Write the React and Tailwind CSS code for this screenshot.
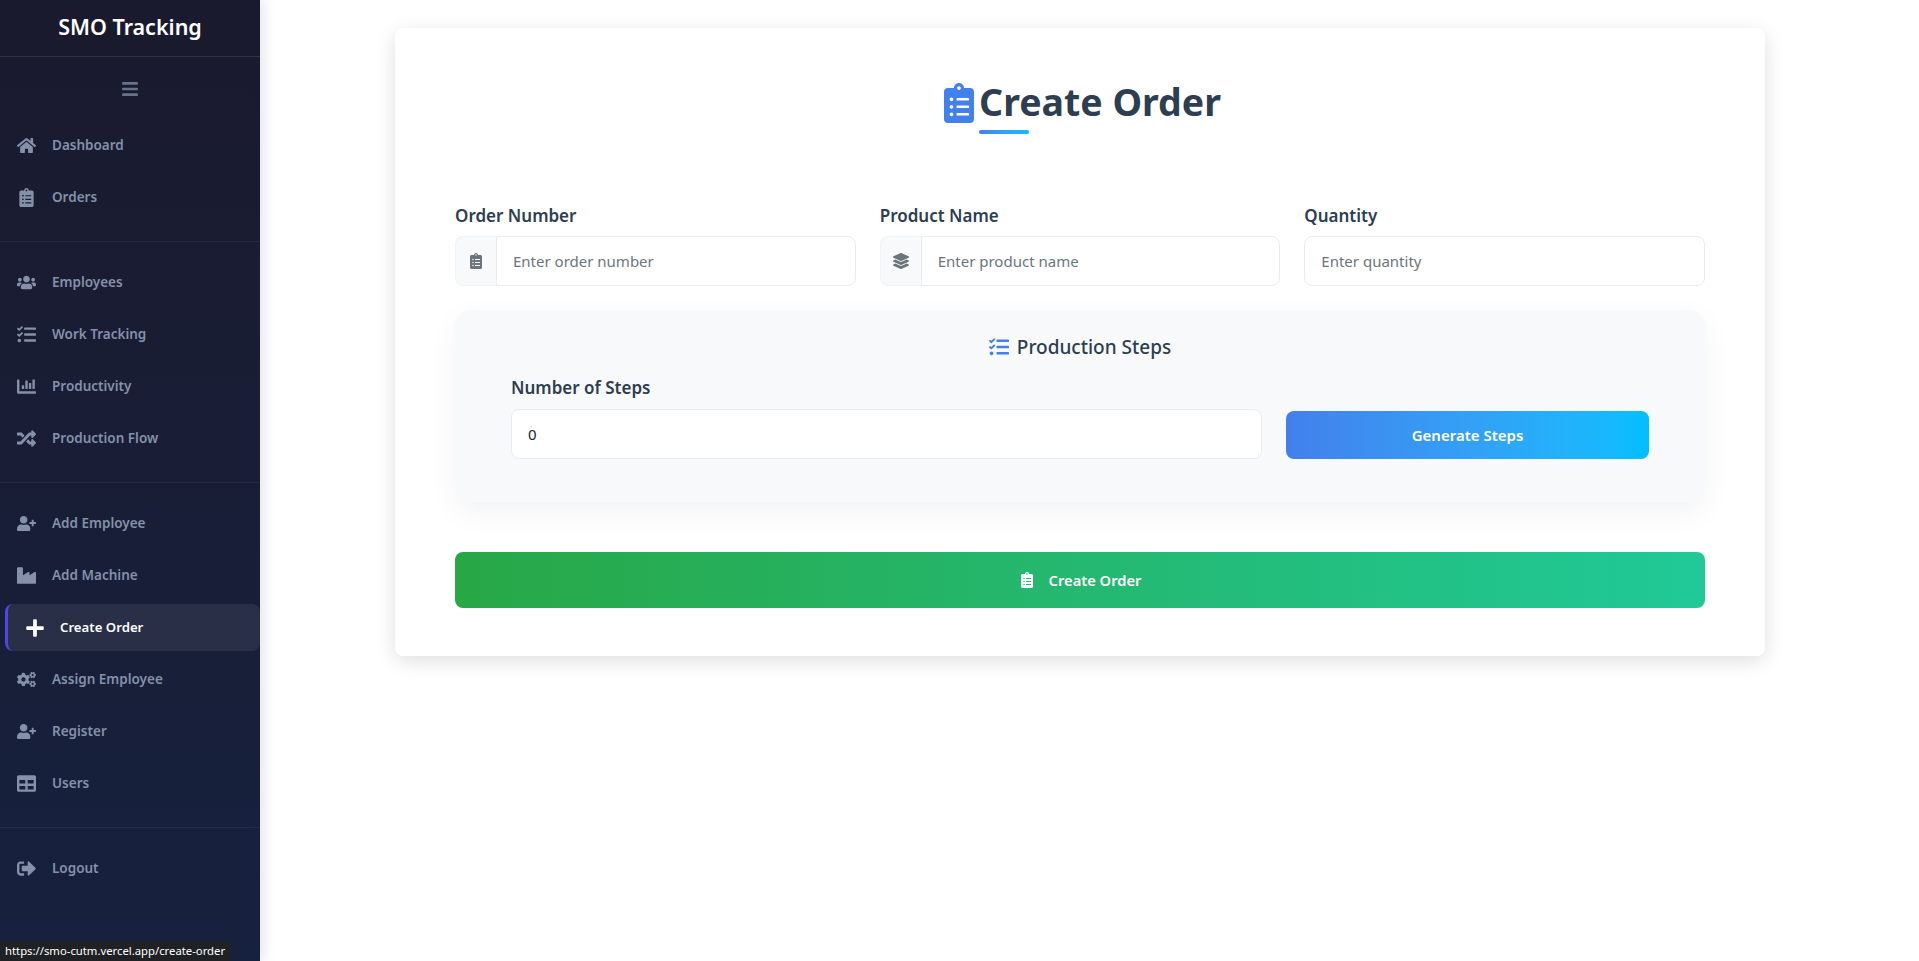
import {
  FaBars,
  FaChartBar,
  FaClipboardList,
  FaCogs,
  FaHome,
  FaIndustry,
  FaLayerGroup,
  FaPlus,
  FaRandom,
  FaSignOutAlt,
  FaTable,
  FaTasks,
  FaUserPlus,
  FaUsers,
} from 'react-icons/fa';

const navGroups = [
  [
    { label: 'Dashboard', icon: FaHome },
    { label: 'Orders', icon: FaClipboardList },
  ],
  [
    { label: 'Employees', icon: FaUsers },
    { label: 'Work Tracking', icon: FaTasks },
    { label: 'Productivity', icon: FaChartBar },
    { label: 'Production Flow', icon: FaRandom },
  ],
  [
    { label: 'Add Employee', icon: FaUserPlus },
    { label: 'Add Machine', icon: FaIndustry },
    { label: 'Create Order', icon: FaPlus, active: true },
    { label: 'Assign Employee', icon: FaCogs },
    { label: 'Register', icon: FaUserPlus },
    { label: 'Users', icon: FaTable },
  ],
  [{ label: 'Logout', icon: FaSignOutAlt }],
];

const NavItem = ({ item }) => {
  const Icon = item.icon;
  if (item.active) {
    return (
      <a className="ml-[5px] flex h-[47px] items-center rounded-lg border-l-[3px] border-[#4f46e5] bg-white/[0.07] pl-[17px] text-[13.2px] font-semibold text-white">
        <span className="flex w-5 justify-center">
          <FaPlus className="text-[20px]" />
        </span>
        <span className="ml-[15px]">{item.label}</span>
      </a>
    );
  }
  return (
    <a className="flex h-[47px] items-center pl-4 text-[13.5px] font-semibold text-[#8491a8]">
      <span className="flex w-5 justify-center">
        <Icon className="text-[19px]" />
      </span>
      <span className="ml-4">{item.label}</span>
    </a>
  );
};

const Sidebar = () => (
  <aside className="flex h-[961px] w-[260px] shrink-0 flex-col bg-gradient-to-b from-[#1a1a2e] to-[#16213e] shadow-[4px_0_12px_rgba(0,0,0,0.1)]">
    <div className="flex h-[57px] items-center justify-center border-b border-white/10 pb-[1px] text-[21.5px] font-semibold text-white">
      SMO Tracking
    </div>
    <div className="flex h-[65px] shrink-0 items-center justify-center pb-[2px] text-[#64748b]">
      <FaBars className="text-lg" />
    </div>
    {navGroups.map((group, i) => (
      <div key={i} className={i < navGroups.length - 1 ? 'flex flex-col gap-[5px] border-b border-white/5 pb-5 mb-[17px]' : 'flex flex-col gap-[5px]'}>
        {group.map((item) => (
          <NavItem key={item.label} item={item} />
        ))}
      </div>
    ))}
  </aside>
);

const Field = ({ label, icon: Icon, placeholder }) => (
  <div className="flex-1">
    <label className="mb-[9px] block text-[17px] leading-[23px] font-semibold text-[#2c3e50]">{label}</label>
    <div className="flex h-[50px]">
      {Icon && (
        <span className="flex w-[41px] shrink-0 items-center justify-center rounded-l-lg border-y border-l border-[#f1f3f5] bg-[#f8f9fa] text-[#6c757d]">
          <Icon className="text-base" />
        </span>
      )}
      <input
        placeholder={placeholder}
        className={`w-full border border-[#e9ecef] bg-white px-4 text-[15px] text-[#212529] outline-none placeholder:text-[#6c757d] ${Icon ? 'rounded-r-lg' : 'rounded-lg'}`}
      />
    </div>
  </div>
);

export default function App() {
  return (
    <div className="relative flex h-[961px] overflow-hidden bg-white font-['Noto_Sans','Open_Sans',sans-serif]">
      <Sidebar />
      <main className="flex-1 pt-7 pl-[135px]">
        <div className="h-[628px] w-[1370px] rounded-lg bg-white px-[60px] pt-[48px] shadow-[0_5px_20px_rgba(0,0,0,0.13)]">
          <div className="flex justify-center">
            <FaClipboardList className="mt-[7px] text-[40px] text-[#4280eb]" />
            <h1 className="relative text-[37.5px] leading-[52px] font-bold text-[#2c3e50]">
              Create Order
              <span className="absolute -bottom-[6px] left-0 h-1 w-[50px] rounded bg-gradient-to-r from-[#4280eb] to-[#00bfff]" />
            </h1>
          </div>

          <div className="mt-[76px] flex gap-6">
            <Field label="Order Number" icon={FaClipboardList} placeholder="Enter order number" />
            <Field label="Product Name" icon={FaLayerGroup} placeholder="Enter product name" />
            <Field label="Quantity" placeholder="Enter quantity" />
          </div>

          <section className="mt-6 h-[193px] rounded-2xl bg-[#f8f9fa] px-14 pt-[23px] shadow-[0_10px_30px_rgba(0,0,0,0.05)]">
            <h2 className="flex items-center justify-center gap-2 text-[19px] leading-[28px] font-medium text-[#2c3e50]">
              <FaTasks className="text-xl text-[#4280eb]" />
              Production Steps
            </h2>
            <div className="mt-[15px] flex items-end gap-6">
              <div className="w-[751px]">
                <label className="mb-[10px] block text-[17px] leading-[23px] font-semibold text-[#2c3e50]">Number of Steps</label>
                <input
                  defaultValue="0"
                  className="h-[50px] w-full rounded-lg border border-[#e9ecef] bg-white px-4 text-[15px] text-[#212529] outline-none"
                />
              </div>
              <button className="h-[48px] w-[363px] rounded-lg bg-gradient-to-r from-[#4280eb] to-[#00bfff] text-[15px] font-semibold text-white">
                Generate Steps
              </button>
            </div>
          </section>

          <button className="mt-[49px] flex h-[56px] w-full items-center justify-center gap-[14px] rounded-lg bg-gradient-to-r from-[#28a745] to-[#20c997] text-[14.7px] font-semibold text-white">
            <FaClipboardList className="text-base" />
            Create Order
          </button>
        </div>
      </main>
      <div className="absolute bottom-0 left-0 h-[20px] rounded-tr bg-[#202124] px-[5px] text-[11.3px] leading-[20px] text-white">
        https://smo-cutm.vercel.app/create-order
      </div>
    </div>
  );
}
